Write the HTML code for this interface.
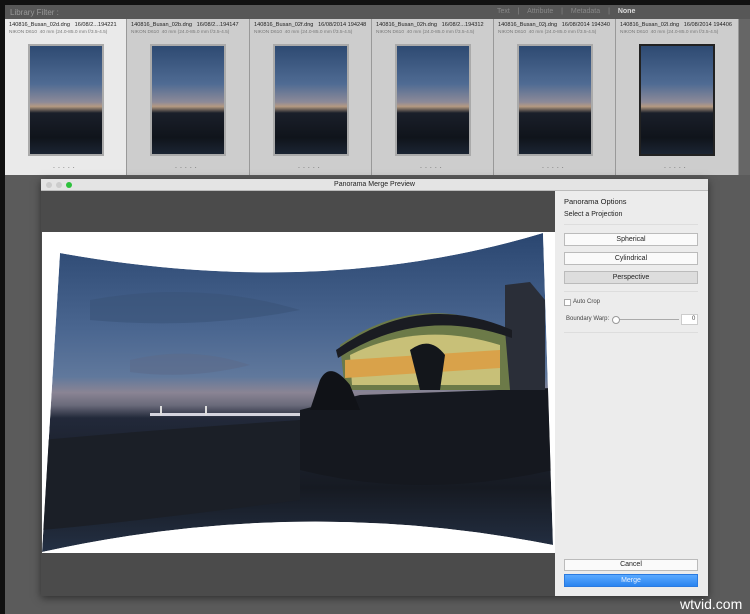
<!DOCTYPE html>
<html><head><style>
body{margin:0;width:750px;height:614px;background:#5b5b5b;font-family:"Liberation Sans",sans-serif;position:relative;overflow:hidden}
.abs{position:absolute}
.cell{position:absolute;top:19px;height:156px;background:#cdcdcd;border-right:1px solid #999;overflow:hidden}
.cell .n{position:absolute;left:4px;top:3px;font-size:5.6px;color:#222;white-space:nowrap}
.cell .m{position:absolute;left:4px;top:11px;font-size:4.8px;color:#777;white-space:nowrap}
.th{position:absolute;left:23px;top:25px;width:72px;height:108px;border:2px solid #aaa;background:linear-gradient(#2e4a72,#4f6b93 35%,#8d8a98 52%,#b59a82 56%,#1a1f2a 62%,#10141b 85%,#1b2433)}
.dots{position:absolute;left:48px;top:144px;font-size:7px;color:#555;letter-spacing:3px}
.btn{position:absolute;left:564px;width:132px;height:11px;background:#fafafa;border:1px solid #bbb;font-size:7px;text-align:center;line-height:11px;color:#222}
</style></head><body>
<div class="abs" style="left:0;top:0;width:750px;height:5px;background:#111"></div>
<div class="abs" style="left:0;top:0;width:5px;height:614px;background:#111"></div>
<div class="abs" style="left:5px;top:5px;width:745px;height:14px;background:#575757;border-bottom:1px solid #333"></div>
<div class="abs" style="left:10px;top:8px;font-size:8px;color:#999">Library Filter :</div>
<div class="abs" style="left:497px;top:8px;font-size:7px;color:#888;word-spacing:6px">Text | Attribute | Metadata | <b style="color:#ddd">None</b></div>
<div class="abs" style="left:739px;top:19px;width:11px;height:156px;background:#666"></div>

<div class="cell" style="left:5px;width:121px;background:#eaeaea"><div class="n">140816_Busan_02d.dng &nbsp; 16/08/2...194221</div><div class="m">NIKON D610 &nbsp;40 mm (24.0-85.0 mm f/3.5-4.5)</div><div class="th"></div><div class="dots">.....</div></div>
<div class="cell" style="left:127px;width:122px"><div class="n">140816_Busan_02b.dng &nbsp; 16/08/2...194147</div><div class="m">NIKON D610 &nbsp;40 mm (24.0-85.0 mm f/3.5-4.5)</div><div class="th"></div><div class="dots">.....</div></div>
<div class="cell" style="left:250px;width:121px"><div class="n">140816_Busan_02f.dng &nbsp; 16/08/2014 194248</div><div class="m">NIKON D610 &nbsp;40 mm (24.0-85.0 mm f/3.5-4.5)</div><div class="th"></div><div class="dots">.....</div></div>
<div class="cell" style="left:372px;width:121px"><div class="n">140816_Busan_02h.dng &nbsp; 16/08/2...194312</div><div class="m">NIKON D610 &nbsp;40 mm (24.0-85.0 mm f/3.5-4.5)</div><div class="th"></div><div class="dots">.....</div></div>
<div class="cell" style="left:494px;width:121px"><div class="n">140816_Busan_02j.dng &nbsp; 16/08/2014 194340</div><div class="m">NIKON D610 &nbsp;40 mm (24.0-85.0 mm f/3.5-4.5)</div><div class="th"></div><div class="dots">.....</div></div>
<div class="cell" style="left:616px;width:122px"><div class="n">140816_Busan_02l.dng &nbsp; 16/08/2014 194406</div><div class="m">NIKON D610 &nbsp;40 mm (24.0-85.0 mm f/3.5-4.5)</div><div class="th" style="border-color:#222"></div><div class="dots">.....</div></div>

<div class="abs" style="left:41px;top:179px;width:667px;height:417px;background:#4b4b4b;box-shadow:0 2px 8px rgba(0,0,0,.5)"></div>
<div class="abs" style="left:41px;top:179px;width:667px;height:11px;background:#e4e4e4;border-bottom:1px solid #bbb;font-size:7px;text-align:center;line-height:11px;color:#222">Panorama Merge Preview</div>
<div class="abs" style="left:46px;top:182px;width:6px;height:6px;border-radius:50%;background:#ccc"></div>
<div class="abs" style="left:56px;top:182px;width:6px;height:6px;border-radius:50%;background:#ccc"></div>
<div class="abs" style="left:66px;top:182px;width:6px;height:6px;border-radius:50%;background:#2dc13c"></div>
<div class="abs" style="left:555px;top:191px;width:153px;height:405px;background:#ececec"></div>
<div class="abs" style="left:564px;top:197px;font-size:7.5px;color:#222">Panorama Options</div>
<div class="abs" style="left:564px;top:211px;font-size:7px;color:#222">Select a Projection</div>
<div class="abs" style="left:564px;top:224px;width:134px;height:1px;background:#ddd"></div>
<div class="btn" style="top:233px">Spherical</div>
<div class="btn" style="top:252px">Cylindrical</div>
<div class="btn" style="top:271px;background:#ddd">Perspective</div>
<div class="abs" style="left:564px;top:291px;width:134px;height:1px;background:#ddd"></div>
<div class="abs" style="left:564px;top:299px;width:5px;height:5px;border:1px solid #aaa;background:#fff"></div>
<div class="abs" style="left:573px;top:299px;font-size:6px;color:#444">Auto Crop</div>
<div class="abs" style="left:566px;top:316px;font-size:6px;color:#444">Boundary Warp:</div>
<div class="abs" style="left:614px;top:319px;width:65px;height:1px;background:#aaa"></div>
<div class="abs" style="left:612px;top:316px;width:6px;height:6px;border-radius:50%;background:#fff;border:1px solid #999"></div>
<div class="abs" style="left:681px;top:314px;width:15px;height:9px;background:#fff;border:1px solid #ccc;font-size:6px;text-align:right;line-height:9px;color:#444">0&nbsp;</div>
<div class="abs" style="left:564px;top:332px;width:134px;height:1px;background:#ddd"></div>
<div class="btn" style="top:559px;height:10px;line-height:10px">Cancel</div>
<div class="btn" style="top:574px;height:11px;background:linear-gradient(#5aa9ff,#2a84f0);border-color:#2a7ae0;color:#e6f0ff">Merge</div>

<div class="abs" style="left:42px;top:232px;width:513px;height:321px;background:#fff"></div>
<svg class="abs" style="left:0;top:0" width="750" height="614">
<defs>
<linearGradient id="g" x1="0" y1="0" x2="0" y2="1">
<stop offset="0" stop-color="#2a4670"/><stop offset=".3" stop-color="#4a6690"/><stop offset=".45" stop-color="#60789c"/><stop offset=".5" stop-color="#8a8494"/><stop offset=".54" stop-color="#6a6a7a"/><stop offset=".58" stop-color="#22293a"/><stop offset=".8" stop-color="#161a22"/><stop offset="1" stop-color="#243044"/>
</linearGradient>
<clipPath id="c"><path d="M60,253 Q320,300 543,233 L553,545 Q300,495 42,552 Z"/></clipPath>
</defs>
<g clip-path="url(#c)">
<path d="M60,253 Q320,300 543,233 L553,545 Q300,495 42,552 Z" fill="url(#g)"/>
<path d="M90,300 Q200,280 300,310 Q200,330 90,320Z" fill="#3a5478" opacity=".6"/>
<path d="M130,360 Q190,345 250,365 Q190,380 130,372Z" fill="#5c6a8a" opacity=".6"/>
<path d="M300,410 L360,395 L553,388 L553,470 Q420,500 300,470 Z" fill="#15181f"/>
<path d="M42,440 Q150,430 300,420 L300,500 Q150,520 42,530Z" fill="#1b1f27"/>
<path d="M505,285 L530,282 L545,300 L545,390 L505,390Z" fill="#2a2e38"/>
<path d="M340,345 Q420,290 505,330 L510,390 L345,390 Z" fill="#6c7a48"/>
<path d="M350,355 Q420,320 500,345 L500,385 L352,385Z" fill="#c8c078"/>
<path d="M345,360 L500,350 L500,368 L345,378Z" fill="#d9a24a"/>
<path d="M336,350 Q420,290 512,330 L512,338 Q420,305 338,358Z" fill="#1a1c22"/>
<path d="M320,380 Q330,360 350,385 L360,410 L310,410Z" fill="#101217"/>
<path d="M410,350 Q430,335 445,355 L440,390 L420,390Z" fill="#13161b"/>
<rect x="150" y="413" width="150" height="3" fill="#d4d4de"/>
<rect x="160" y="406" width="2" height="9" fill="#ddd"/><rect x="205" y="406" width="2" height="9" fill="#ddd"/>
</g>
</svg>
<div class="abs" style="left:680px;top:596px;font-size:14px;color:#fff">wtvid.com</div>
</body></html>
